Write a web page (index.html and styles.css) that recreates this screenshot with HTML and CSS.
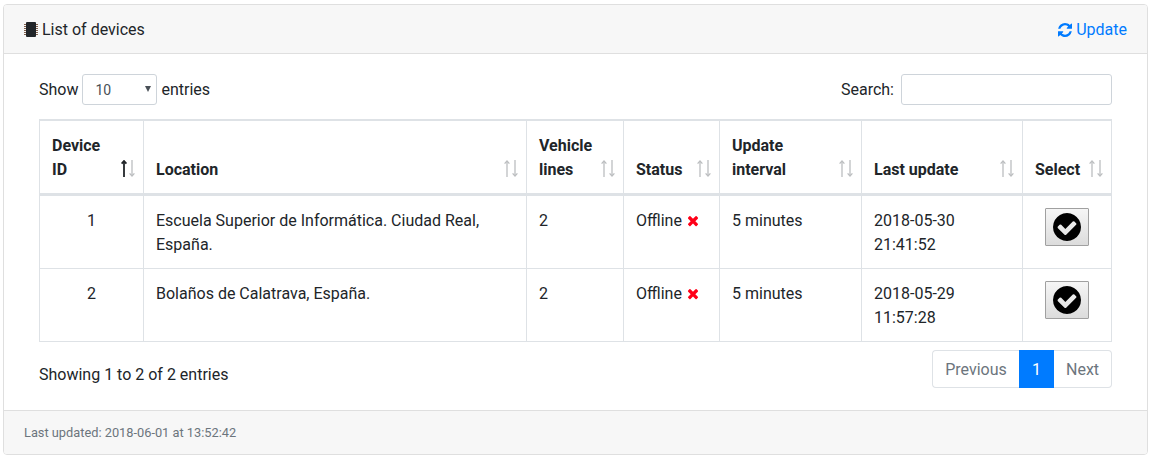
FILE: index.html
```html
<!DOCTYPE html>
<html lang="en">
<head>
<meta charset="utf-8">
<title>List of devices</title>
<link rel="stylesheet" href="styles.css">
</head>
<body>
<svg class="defs" aria-hidden="true">
  <symbol id="sort" viewBox="0 0 14 17">
    <g class="arrow-up"><path d="M3 1.500V17" /><path d="M.6 3.600L3 1l2.400 2.600" /></g>
    <g class="arrow-down"><path d="M11 0v15.500" /><path d="M8.600 13.400L11 16l2.400-2.600" /></g>
  </symbol>
  <symbol id="times" viewBox="0 0 1408 1408">
    <path d="M1298 1086q0 40-28 68l-136 136q-28 28-68 28t-68-28L704 996l-294 294q-28 28-68 28t-68-28l-136-136q-28-28-28-68t28-68l294-294-294-294q-28-28-28-68t28-68l136-136q28-28 68-28t68 28l294 294 294-294q28-28 68-28t68 28l136 136q28 28 28 68t-28 68L976 724l294 294q28 28 28 68z" />
  </symbol>
  <symbol id="check" viewBox="0 0 1536 1536">
    <path d="M1284 606q0-28-18-46l-91-90q-19-19-45-19t-45 19L677 877 451 651q-19-19-45-19t-45 19l-91 90q-18 18-18 46 0 27 18 45l362 362q19 19 45 19 27 0 46-19l543-543q18-18 18-45zm252 162q0 209-103 385.500T1153.500 1433 768 1536t-385.500-103T103 1153.500 0 768t103-385.500T382.500 103 768 0t385.500 103T1433 382.500 1536 768z" />
  </symbol>
</svg>
<section class="card">
  <header class="card-header">
    <div class="title">
      <svg class="chip" viewBox="0 0 14 16"><path class="pins" d="M0 2.500h14M0 4.500h14M0 6.500h14M0 8.500h14M0 10.500h14M0 12.500h14" /><rect x="2" y="0" width="10" height="15" rx="1" /></svg>
      <span>List of devices</span>
    </div>
    <a class="update">
      <svg class="refresh" viewBox="0 0 1536 1536"><path d="M1511 928q0 5-1 7-64 268-268 434.500T764 1536q-146 0-282.500-55T238 1324l-129 129q-19 19-45 19t-45-19-19-45V960q0-26 19-45t45-19h448q26 0 45 19t19 45-19 45l-137 137q71 66 161 102t187 36q134 0 250-65t186-179q11-17 53-117 8-23 30-23h192q13 0 22.500 9.500t9.500 22.500zm25-800v448q0 26-19 45t-45 19h-448q-26 0-45-19t-19-45 19-45l138-138Q969 256 768 256q-134 0-250 65T332 500q-11 17-53 117-8 23-30 23H50q-13 0-22.500-9.500T18 608v-7q65-268 270-434.500T768 0q146 0 284 55.500T1297 212l130-129q19-19 45-19t45 19 19 45z" /></svg>
      <span>Update</span>
    </a>
  </header>
  <div class="card-body">
    <div class="controls">
      <div class="length"><span>Show</span><div class="select"><span>10</span><svg class="caret" viewBox="0 0 6 6"><path d="M0 0h6L3 6z" /></svg></div><span>entries</span></div>
      <label class="search"><span>Search:</span><input type="text" class="search-input"></label>
    </div>
    <table class="devices">
      <colgroup><col class="c-id"><col class="c-location"><col class="c-lines"><col class="c-status"><col class="c-interval"><col class="c-last"><col class="c-select"></colgroup>
      <thead>
        <tr>
          <th class="sorted"><div class="head"><span>Device<br>ID</span><svg class="sort"><use href="#sort" /></svg></div></th>
          <th><div class="head"><span>Location</span><svg class="sort"><use href="#sort" /></svg></div></th>
          <th><div class="head"><span>Vehicle<br>lines</span><svg class="sort"><use href="#sort" /></svg></div></th>
          <th><div class="head"><span>Status</span><svg class="sort"><use href="#sort" /></svg></div></th>
          <th><div class="head"><span>Update<br>interval</span><svg class="sort"><use href="#sort" /></svg></div></th>
          <th><div class="head"><span>Last update</span><svg class="sort"><use href="#sort" /></svg></div></th>
          <th><div class="head"><span>Select</span><svg class="sort"><use href="#sort" /></svg></div></th>
        </tr>
      </thead>
      <tbody>
        <tr>
          <td class="center">1</td><td>Escuela Superior de Informática. Ciudad Real, España.</td><td>2</td>
          <td>Offline <svg class="times"><use href="#times" /></svg></td><td>5 minutes</td><td>2018-05-30 21:41:52</td>
          <td class="action"><button class="pick" aria-label="Select"><svg class="check"><use href="#check" /></svg></button></td>
        </tr>
        <tr>
          <td class="center">2</td><td>Bolaños de Calatrava, España.</td><td>2</td>
          <td>Offline <svg class="times"><use href="#times" /></svg></td><td>5 minutes</td><td>2018-05-29 11:57:28</td>
          <td class="action"><button class="pick" aria-label="Select"><svg class="check"><use href="#check" /></svg></button></td>
        </tr>
      </tbody>
    </table>
    <div class="summary">
      <span class="info">Showing 1 to 2 of 2 entries</span>
      <nav class="pages"><span class="page previous">Previous</span><span class="page active">1</span><span class="page next">Next</span></nav>
    </div>
  </div>
  <footer class="card-footer">Last updated: 2018-06-01 at 13:52:42</footer>
</section>
</body>
</html>
```
FILE: styles.css
```css
* { box-sizing: border-box; }
body {
  margin: 0;
  padding: 4px 6px 0 3px;
  background: #fff;
  color: #212529;
  font: 16px/24px Roboto, sans-serif;
}
svg { fill: currentColor; flex: none; }
.defs { display: none; }
.card {
  display: flex;
  flex-direction: column;
  height: 451px;
  border: 1px solid #dfdfdf;
  border-radius: 4px;
  overflow: hidden;
}
.card-header {
  display: flex;
  justify-content: space-between;
  height: 49px;
  padding: 13px 20px 11px;
  background: #f7f7f7;
  border-bottom: 1px solid #dfdfdf;
}
.title, .update { display: flex; align-items: center; gap: 4px; }
.update { color: #007bff; }
.chip { width: 14px; height: 16px; margin-bottom: 1px; }
.pins { stroke: #80604c; stroke-width: 1; }
.refresh { width: 14px; height: 14px; margin-bottom: 1px; }
.card-body { flex: 1; padding: 20px 35px 0; }
.controls { display: flex; justify-content: space-between; height: 31px; }
.length { display: flex; align-items: center; gap: 4px; }
.select {
  display: flex;
  align-items: center;
  justify-content: space-between;
  width: 75px;
  height: 31px;
  padding: 0 5px 0 12px;
  border: 1px solid #ced4da;
  border-radius: 3px;
  color: #495057;
  font-size: 14px;
}
.caret { width: 6px; height: 6px; margin-bottom: 2px; }
.search { display: flex; align-items: center; gap: 7px; }
.search-input {
  width: 211px;
  height: 31px;
  border: 1px solid #ced4da;
  border-radius: 3px;
}
.devices {
  table-layout: fixed;
  width: 1073px;
  margin-top: 14px;
  border: 0 solid #dee2e6;
  border-width: 2px 0 0 1px;
  border-collapse: separate;
  border-spacing: 0;
}
.c-id { width: 104px; }
.c-location { width: 383px; }
.c-lines { width: 97px; }
.c-status { width: 96px; }
.c-interval { width: 142px; }
.c-last { width: 161px; }
.c-select { width: 89px; }
th, td {
  padding: 13px 12px 11px;
  border: 0 solid #dee2e6;
  border-width: 0 1px 1px 0;
  text-align: left;
}
th {
  height: 75px;
  padding-right: 8px;
  border-bottom-width: 3px;
  vertical-align: bottom;
  font-weight: 700;
}
td { height: 73px; vertical-align: top; }
.center { text-align: center; }
.head { display: flex; align-items: flex-end; justify-content: space-between; white-space: nowrap; }
.sort { width: 14px; height: 17px; margin-bottom: 5px; fill: none; stroke: #bcbec0; stroke-width: 1.3; }
.arrow-up { stroke: var(--up, #bcbec0); stroke-width: var(--up-width, 1.3); }
.sorted .sort { --up: #212529; --up-width: 1.8; }
.times { width: 12px; height: 12px; margin-left: 1px; color: #ff0018; vertical-align: -1px; }
.action { padding: 12px 12px 0; }
.pick {
  display: flex;
  align-items: center;
  justify-content: center;
  width: 44px;
  height: 38px;
  margin-left: 10px;
  padding: 0;
  border: 1px solid #a0a0a0;
  border-radius: 1px;
  background: linear-gradient(#f6f6f6, #dcdcdc);
  color: #000;
}
.check { width: 28px; height: 28px; }
.summary { display: flex; justify-content: space-between; padding-top: 8px; }
.info { padding-top: 13px; }
.pages { display: flex; height: 38px; color: #6c757d; }
.page { padding: 7px 12px 5px; border: 1px solid #dee2e6; text-align: center; }
.previous { width: 87px; border-right: 0; border-radius: 4px 0 0 4px; }
.active { width: 35px; border-color: #007bff; background: #007bff; color: #fff; }
.next { width: 58px; border-left: 0; border-radius: 0 4px 4px 0; }
.card-footer {
  height: 44px;
  padding: 10px 20px;
  border-top: 1px solid #dfdfdf;
  background: #f7f7f7;
  color: #6c757d;
  font-size: 12.8px;
}
```
